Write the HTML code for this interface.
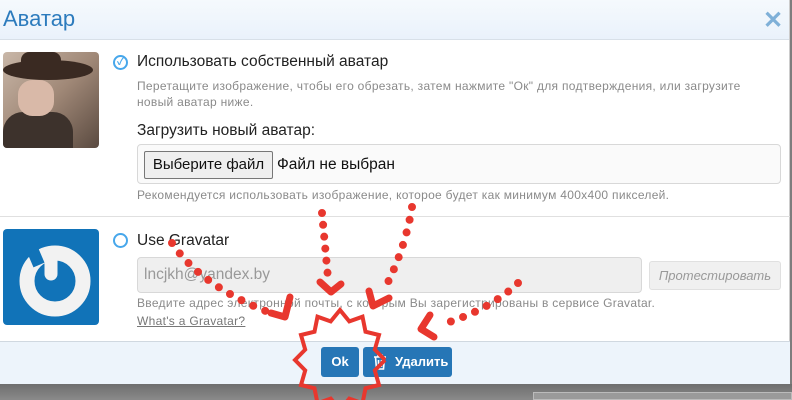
<!DOCTYPE html>
<html><head><meta charset="utf-8"><style>
*{box-sizing:border-box;margin:0;padding:0}
body{width:792px;height:400px;overflow:hidden;background:#7d7d7d;font-family:"Liberation Sans","Noto Sans CJK SC",sans-serif;position:relative}
.bd{position:absolute;left:0;top:384px;width:792px;height:16px;background:linear-gradient(#6e6e6e,#8a8a8a)}
.bd2{position:absolute;left:533px;top:392px;width:259px;height:8px;background:#9a9a9a;border:1px solid #bbb}
.m{position:absolute;left:0;top:0;width:790px;height:384px;background:#fff;border-right:1px solid #ccc}
.hd{height:40px;background:linear-gradient(#f5f9fd,#eaf2fb);border-bottom:1px solid #d8e0e8;position:relative}
.hd h1{font-weight:normal;font-size:22px;color:#2c7bbd;position:absolute;left:3px;top:6px}
.x{position:absolute;left:763px;top:6px;font-size:24px;color:#7fb0d8;font-weight:bold}
.a{position:absolute}
.t{font-size:15.5px;color:#222}
.s{font-size:12px;color:#8a8a8a;line-height:16px;letter-spacing:0.3px}
.ft{position:absolute;left:0;top:341px;width:790px;height:43px;background:#edf4fb;border-top:1px solid #d0d8e0}
.btn{position:absolute;background:#2676b6;color:#fff;font-size:13px;font-weight:bold;border-radius:3px;text-align:center;line-height:30px}
</style></head><body>
<div class="bd"></div><div class="bd2"></div>
<div class="m">
<div class="hd"><h1>Аватар</h1><div class="x">✕</div></div>
<div class="a" style="left:3px;top:52px;width:96px;height:96px;border-radius:4px;background:linear-gradient(135deg,#c9b7a8,#a08877 50%,#5a4a40);overflow:hidden">
 <div style="position:absolute;left:0;top:8px;width:90px;height:20px;background:#3a2a22;border-radius:50%"></div>
 <div style="position:absolute;left:18px;top:0;width:40px;height:20px;background:#3a2a22;border-radius:8px 8px 0 0"></div>
 <div style="position:absolute;left:0;top:60px;width:70px;height:40px;background:#3d322c;border-radius:20px 20px 0 0"></div>
 <div style="position:absolute;left:15px;top:28px;width:36px;height:36px;background:#d9b9a8;border-radius:40%"></div>
</div>
<div class="a" style="left:113px;top:55px;width:15px;height:15px;border:2px solid #47a7eb;border-radius:50%;color:#47a7eb;font-size:10px;line-height:11px;text-align:center;font-weight:bold">✓</div>
<div class="a t" style="left:137px;top:53px">Использовать собственный аватар</div>
<div class="a s" style="left:137px;top:78px;width:630px">Перетащите изображение, чтобы его обрезать, затем нажмите "Ок" для подтверждения, или загрузите новый аватар ниже.</div>
<div class="a t" style="left:137px;top:122px">Загрузить новый аватар:</div>
<div class="a" style="left:137px;top:144px;width:644px;height:40px;border:1px solid #d8d8d8;border-radius:4px;background:#fafafa"></div>
<div class="a" style="left:144px;top:151px;width:129px;height:28px;border:1px solid #777;background:#efefef;border-radius:2px;font-size:15px;line-height:26px;text-align:center;color:#111">Выберите файл</div>
<div class="a t" style="left:277px;top:156px;color:#111">Файл не выбран</div>
<div class="a s" style="left:137px;top:187px">Рекомендуется использовать изображение, которое будет как минимум 400x400 пикселей.</div>
<div class="a" style="left:0;top:216px;width:790px;border-top:1px solid #e0e0e0"></div>
<div class="a" style="left:3px;top:229px;width:96px;height:96px;border-radius:4px;background:#1173b8">
 <svg width="96" height="96"><circle cx="52" cy="52" r="28" fill="none" stroke="#f2f2f2" stroke-width="15"/><path d="M30 22 L36 36" stroke="#1173b8" stroke-width="12"/><path d="M48 45 V30" stroke="#f2f2f2" stroke-width="13" stroke-linecap="round"/></svg>
</div>
<div class="a" style="left:113px;top:233px;width:15px;height:15px;border:2px solid #47a7eb;border-radius:50%"></div>
<div class="a t" style="left:137px;top:232px">Use Gravatar</div>
<div class="a" style="left:137px;top:257px;width:505px;height:36px;border:1px solid #d8d8d8;border-radius:4px;background:#efefef;font-size:15.5px;color:#999;padding:8px 6px">lncjkh@yandex.by</div>
<div class="a" style="left:649px;top:261px;width:132px;height:29px;border:1px solid #e0e0e0;border-radius:3px;background:#f0f0f0;font-size:13px;color:#999;font-style:italic;text-align:center;line-height:27px">Протестировать</div>
<div class="a s" style="left:137px;top:295px">Введите адрес электронной почты, с которым Вы зарегистрированы в сервисе Gravatar.</div>
<div class="a s" style="left:137px;top:313px;text-decoration:underline;color:#777">What's a Gravatar?</div>
<div class="ft"></div>
<div class="btn" style="left:321px;top:347px;width:38px">Ok</div>
<div class="btn" style="left:363px;top:347px;width:89px;text-align:left;padding-left:32px">Удалить</div>
<svg class="a" style="left:373px;top:354px" width="14" height="16"><g fill="none" stroke="#fff" stroke-width="1.6"><path d="M1 3H13M5 3V1H9V3M2.5 3L3.5 15H10.5L11.5 3M5.5 6V13M8.5 6V13"/></g></svg>
</div>
<svg class="a" style="left:0;top:0" width="792" height="400">
<g fill="none" stroke="#e8372e" stroke-linecap="round" stroke-linejoin="round">
<polyline points="385,360 374.8,370.4 379,385 365.5,388.3 362.5,403.3 349.3,398.6 340,410 330.7,398.6 317.5,403.3 314.5,388.3 301,385 305.2,370.4 295,360 305.2,349.6 301,335 314.5,331.7 317.5,316.7 330.7,321.4 340,310 349.3,321.4 362.5,316.7 365.5,331.7 379,335 374.8,349.6 385,360" stroke-width="4" stroke-linecap="butt" stroke-linejoin="miter"/>
<path d="M172,243 Q200,285 268,312" stroke-width="8" stroke-dasharray="0 13"/>
<polyline points="290,297 285,317 271,313" stroke-width="7"/>
<path d="M322,213 Q325,245 328,278" stroke-width="8" stroke-dasharray="0 12"/>
<polyline points="320,282 331,292 341,284" stroke-width="7"/>
<path d="M412,207 Q405,250 384,290" stroke-width="8" stroke-dasharray="0 13"/>
<polyline points="369,291 373,306 389,298" stroke-width="7"/>
<path d="M518,283 Q490,310 440,325" stroke-width="8" stroke-dasharray="0 13"/>
<polyline points="430,315 421,329 434,337" stroke-width="7"/>
</g></svg>
</body></html>
